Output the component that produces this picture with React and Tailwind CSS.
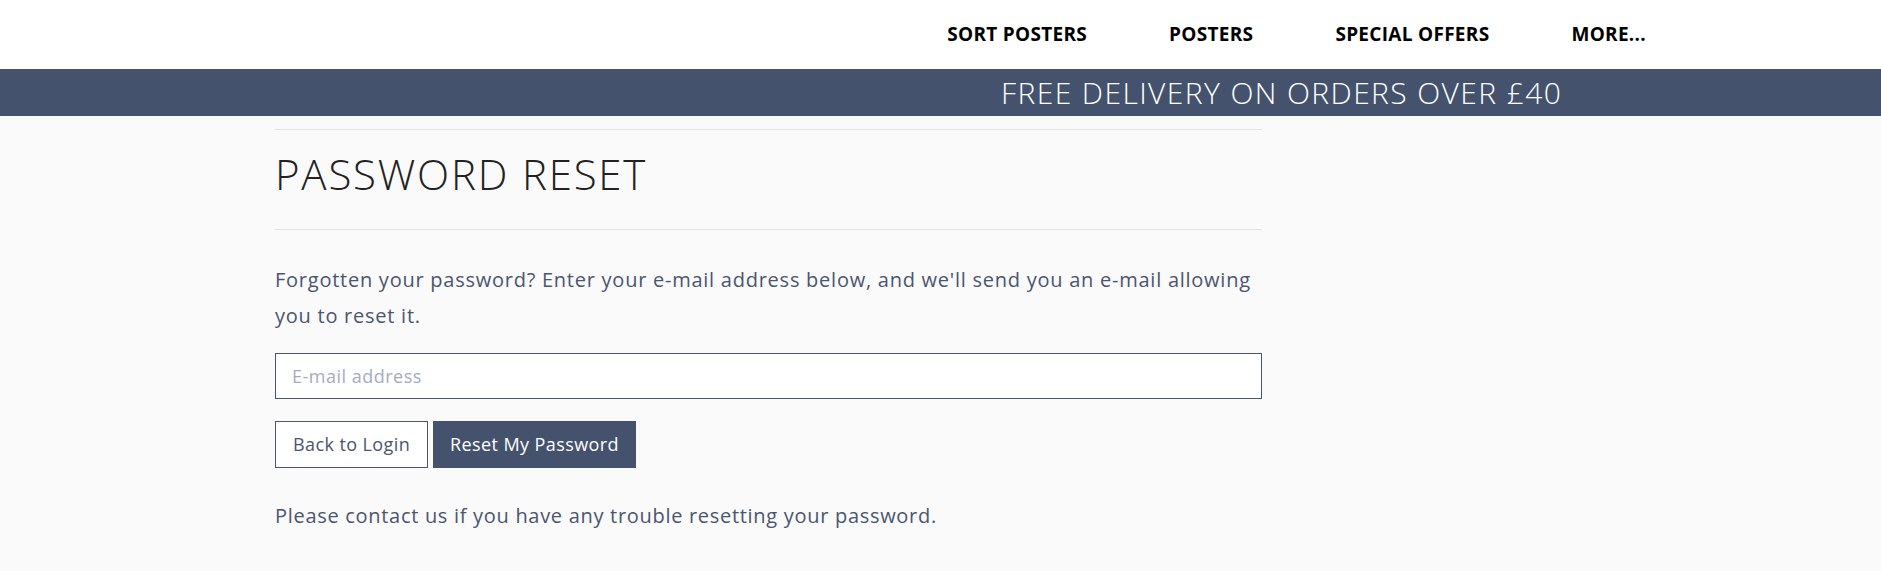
import React from "react";

const navItems = ["SORT POSTERS", "POSTERS", "SPECIAL OFFERS", "MORE..."];

const App = () => {
  return (
    <div className="min-h-[571px] bg-[#fafafa] font-['Open_Sans',sans-serif]">
      {/* Top nav */}
      <header className="h-[69px] bg-white flex items-center justify-end pr-[235px]">
        <nav className="flex gap-[82px]">
          {navItems.map((item) => (
            <a key={item} href="#" className="text-[19px] font-bold text-black tracking-[0.3px]">
              {item}
            </a>
          ))}
        </nav>
      </header>

      {/* Delivery banner */}
      <div className="h-[47px] bg-[#44526d] flex items-center pl-[1001px]">
        <span className="text-[30px] font-light text-white leading-none tracking-[1.4px] whitespace-nowrap">
          FREE DELIVERY ON ORDERS OVER £40
        </span>
      </div>

      {/* Content */}
      <main className="ml-[275px] w-[987px] pt-[13px] pb-8">
        <div className="border-t border-[#e3e3e3]" />
        <h1 className="text-[42px] font-light text-[#222] leading-[48px] tracking-[1.8px] pt-[20px] pb-[31px]">
          PASSWORD RESET
        </h1>
        <div className="border-t border-[#e3e3e3]" />

        <p className="mt-[32px] text-[20px] leading-[36px] tracking-[0.75px] text-[#4a5570]">
          Forgotten your password? Enter your e-mail address below, and we'll send you an e-mail allowing you to reset it.
        </p>

        <form className="mt-[19px]">
          <input
            type="email"
            placeholder="E-mail address"
            className="w-full h-[46px] bg-white border border-[#4a5570] px-[16px] text-[18px] tracking-[0.5px] text-[#4a5570] placeholder:text-[#a3adbd] outline-none"
          />
          <div className="flex gap-[5px] mt-[22px]">
            <button
              type="button"
              className="h-[47px] px-[17px] bg-white border border-[#4a5570] text-[18px] tracking-[0.4px] text-[#4a5570]"
            >
              Back to Login
            </button>
            <button
              type="submit"
              className="h-[47px] px-[17px] bg-[#44526d] text-[18px] tracking-[0.4px] text-white"
            >
              Reset My Password
            </button>
          </div>
        </form>

        <p className="mt-[30px] text-[20px] leading-[36px] tracking-[0.7px] text-[#4a5570]">
          Please contact us if you have any trouble resetting your password.
        </p>
      </main>
    </div>
  );
};

export default App;
